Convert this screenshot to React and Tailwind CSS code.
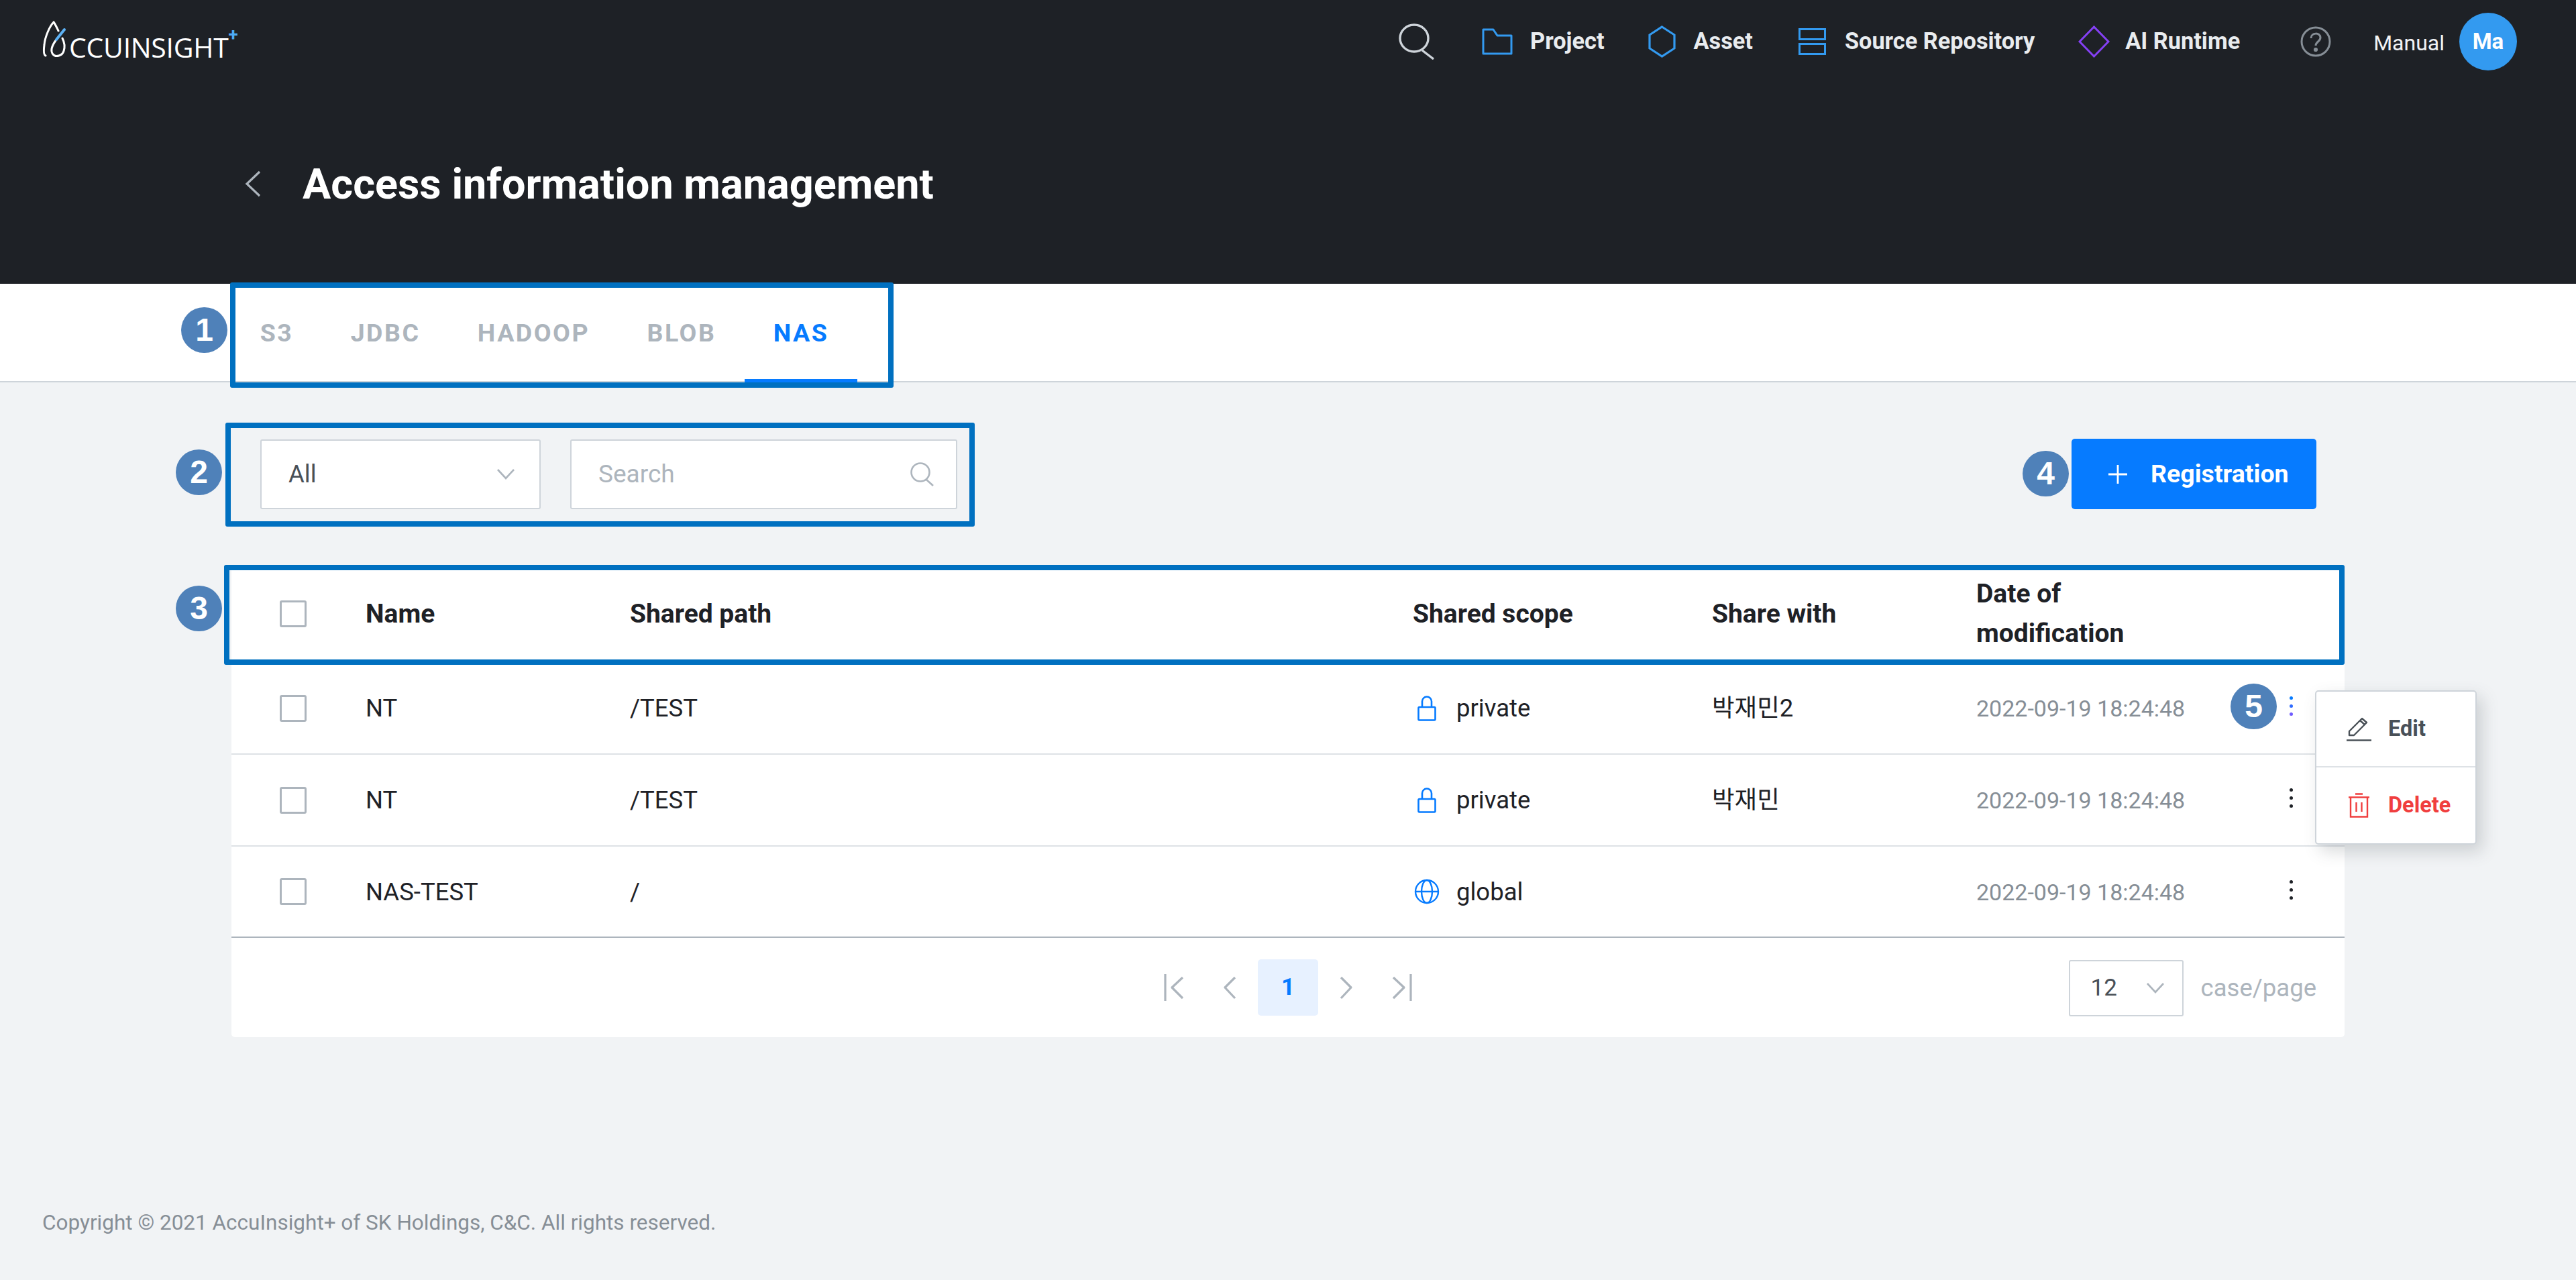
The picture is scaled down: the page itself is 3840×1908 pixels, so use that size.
import React from 'react';

const rows = [
  { name: 'NT', path: '/TEST', scope: 'private', share: '박재민2', active: true },
  { name: 'NT', path: '/TEST', scope: 'private', share: '박재민' },
  { name: 'NAS-TEST', path: '/', scope: 'global', share: '' },
];

const tabs = ['S3', 'JDBC', 'HADOOP', 'BLOB', 'NAS'];

const LockIcon = () => (
  <svg width="28" height="38" viewBox="0 0 28 38" fill="none" stroke="#067bff" strokeWidth="2.6">
    <rect x="1.5" y="17" width="25" height="19.5" rx="1.5" />
    <path d="M7 17V8.5a7 7 0 0 1 14 0V17" />
  </svg>
);

const GlobeIcon = () => (
  <svg width="38" height="38" viewBox="0 0 38 38" fill="none" stroke="#067bff" strokeWidth="2.4">
    <circle cx="19" cy="19" r="17" />
    <ellipse cx="19" cy="19" rx="8" ry="17" />
    <path d="M2 19h34" />
  </svg>
);

const Dots = ({ active }) => (
  <div className="flex flex-col gap-[7px] items-center">
    <span className={`w-[5px] h-[5px] rounded-full ${active ? 'bg-[#067bff]' : 'bg-[#1e2126]'}`} />
    <span className={`w-[5px] h-[5px] rounded-full ${active ? 'bg-[#2f6bff]' : 'bg-[#1e2126]'}`} />
    <span className={`w-[5px] h-[5px] rounded-full ${active ? 'bg-[#6f5bff]' : 'bg-[#1e2126]'}`} />
  </div>
);

const Checkbox = () => (
  <div className="w-[40px] h-[40px] border-[3px] border-[#adb5bd] rounded-[3px] bg-white" />
);

const EdgeChevron = ({ left }) => (
  <svg width="30" height="40" viewBox="0 0 30 40" fill="none" stroke="#adb5bd" strokeWidth="3.2" strokeLinejoin="round">
    {left ? <path d="M2 0v40M28 5L12 20l16 16" /> : <path d="M28 0v40M2 5l16 15L2 36" />}
  </svg>
);

const PageChevron = ({ left }) => (
  <svg width="20" height="40" viewBox="0 0 20 40" fill="none" stroke="#adb5bd" strokeWidth="3.2" strokeLinejoin="round">
    {left ? <path d="M18 5L3 20l15 16" /> : <path d="M2 5l15 15L2 36" />}
  </svg>
);

const Badge = ({ className, children }) => (
  <div className={`absolute w-[69px] h-[68px] rounded-full bg-[#4f81b9] text-white font-['Liberation_Sans',sans-serif] font-bold text-[48px] flex items-center justify-center ${className}`}>
    {children}
  </div>
);

const App = () => {
  return (
    <div className="relative w-[3840px] h-[1908px] overflow-hidden flex flex-col bg-[#f1f3f5] font-['Roboto','Noto_Sans_CJK_KR',sans-serif]">
      {/* Header */}
      <header className="h-[423px] bg-[#1e2126] flex flex-col shrink-0">
        <div className="h-[124px] flex items-center pl-[63px] pr-[88px]">
          <div className="flex items-end h-[56px] -mt-[6px]">
            <svg width="40" height="56" viewBox="0 0 40 56" fill="none" strokeWidth="3" strokeLinecap="round">
              <path d="M5 52c-3-1-3-8-2-16C4 24 11 8 17 2c3 4 5 9 7 13" stroke="#fff" />
              <path d="M30 26c3 6 4 13 2 19-2 7-12 10-16 5-5-6-1-14 5-22" stroke="#fff" />
              <path d="M21 28l12-15" stroke="#5db2f5" strokeWidth="4" />
            </svg>
            <span className="font-['Open_Sans',sans-serif] text-[41px] leading-[34px] text-white tracking-[-0.3px]">CCUINSIGHT</span>
            <span className="text-[#4dabf7] text-[26px] leading-none font-bold self-start mt-[7px]">+</span>
          </div>
          <div className="ml-auto flex items-center text-[34.3px] font-bold text-[#e9ecef]">
            <svg width="54" height="54" viewBox="0 0 54 54" fill="none" stroke="#ced4da" strokeWidth="3.4">
              <ellipse cx="23" cy="22" rx="21" ry="20" />
              <path d="M35 40l17 13" />
            </svg>
            <div className="flex items-center gap-[26px] ml-[70px]">
              <svg width="46" height="40" viewBox="0 0 46 40" fill="none" stroke="#339af0" strokeWidth="3">
                <path d="M2 2h15l6 9h21v27H2z" strokeLinejoin="round" />
              </svg>
              <span>Project</span>
            </div>
            <div className="flex items-center gap-[27px] ml-[65px]">
              <svg width="41" height="48" viewBox="0 0 41 48" fill="none" stroke="#339af0" strokeWidth="3.2">
                <path d="M20.5 2L39 14v20L20.5 46 2 34V14z" />
              </svg>
              <span>Asset</span>
            </div>
            <div className="flex items-center gap-[28px] ml-[68px]">
              <svg width="41" height="40" viewBox="0 0 41 40" fill="none" stroke="#339af0" strokeWidth="3">
                <rect x="1.5" y="1.5" width="38" height="15" />
                <rect x="1.5" y="23.5" width="38" height="15" />
              </svg>
              <span>Source Repository</span>
            </div>
            <div className="flex items-center gap-[23px] ml-[65px]">
              <svg width="47" height="48" viewBox="0 0 47 48" fill="none" stroke="#8540f5" strokeWidth="3">
                <path d="M23.5 2L45 24 23.5 46 2 24z" />
              </svg>
              <span>AI Runtime</span>
            </div>
            <svg className="ml-[90px]" width="46" height="46" viewBox="0 0 46 46" fill="none" stroke="#868e96" strokeWidth="3">
              <circle cx="23" cy="23" r="21" />
              <path d="M16 18c0-9 14-9 14-1 0 6-7 6-7 12" />
              <circle cx="23" cy="35" r="1.6" fill="#868e96" />
            </svg>
            <span className="ml-[63px] text-[32px] font-normal text-[#f1f3f5] mt-[4px]">Manual</span>
            <div className="ml-[22px] w-[86px] h-[86px] rounded-full bg-[#339af0] flex items-center justify-center text-white text-[33px] font-bold">Ma</div>
          </div>
        </div>
        <div className="flex-1 flex items-center pl-[365px]">
          <svg width="24" height="40" viewBox="0 0 24 40" fill="none" stroke="#adb5bd" strokeWidth="3.2">
            <path d="M22 2L3 20l19 18" />
          </svg>
          <h1 className="ml-[62px] pt-[3px] text-[63px] font-bold text-white">Access information management</h1>
        </div>
      </header>

      {/* Tabs */}
      <nav className="h-[147px] shrink-0 bg-white border-b-2 border-[#ced4da] pl-[345px] flex">
        {tabs.map((tab) => (
          <div
            key={tab}
            className={`px-[42.7px] flex items-center text-[37.5px] font-bold tracking-[2.5px] -mb-[2px] border-b-[5px] pt-[5px] ${tab === 'NAS' ? 'text-[#067bff] border-[#067bff]' : 'text-[#adb5bd] border-transparent'}`}
          >
            {tab}
          </div>
        ))}
      </nav>

      <main className="px-[345px]">
        {/* Toolbar */}
        <div className="mt-[84px] h-[105px] flex items-center">
          <div className="ml-[43px] w-[418px] h-[104px] bg-white border-2 border-[#ced4da] rounded-[3px] flex items-center justify-between pl-[40px] pr-[37px] text-[36.5px] text-[#495057]">
            <span className="pt-[2px]">All</span>
            <svg width="26" height="16" viewBox="0 0 26 16" fill="none" stroke="#adb5bd" strokeWidth="2.6">
              <path d="M1 1l12 13L25 1" />
            </svg>
          </div>
          <div className="ml-[44px] w-[577px] h-[104px] bg-white border-2 border-[#ced4da] rounded-[3px] flex items-center pl-[40px] pr-[32px]">
            <input
              placeholder="Search"
              className="flex-1 min-w-0 outline-none text-[37px] text-[#495057] placeholder:text-[#adb5bd]"
            />
            <svg width="36" height="36" viewBox="0 0 36 36" fill="none" stroke="#adb5bd" strokeWidth="2.6">
              <circle cx="15" cy="15" r="13.5" />
              <path d="M24 26l10 9" />
            </svg>
          </div>
          <button className="ml-auto mr-[42px] w-[365px] h-[105px] rounded-[5px] bg-[#067bff] text-white text-[37.5px] font-bold flex items-center pl-[55px] gap-[35px]">
            <svg width="28" height="28" viewBox="0 0 28 28" fill="none" stroke="#fff" strokeWidth="2.8">
              <path d="M14 0v28M0 14h28" />
            </svg>
            <span>Registration</span>
          </button>
        </div>

        {/* Table */}
        <div className="mt-[83px] bg-white rounded-b-[5px]">
          <div className="h-[146px] grid grid-cols-[200px_394px_1167px_446px_394px_449px_100px] items-center text-[39px] font-bold text-[#1e2126]">
            <div className="pl-[72px]"><Checkbox /></div>
            <div>Name</div>
            <div>Shared path</div>
            <div>Shared scope</div>
            <div>Share with</div>
            <div className="leading-[59px]">Date of<br />modification</div>
          </div>
          {rows.map((row, i) => (
            <div
              key={i}
              className={`grid grid-cols-[200px_394px_1167px_446px_394px_449px_100px] items-center text-[36.5px] text-[#1e2126] border-b-2 ${i === rows.length - 1 ? 'h-[136px] border-[#adb5bd]' : 'h-[137px] border-[#dee2e6]'}`}
            >
              <div className="pl-[72px]"><Checkbox /></div>
              <div className="pt-[2px]">{row.name}</div>
              <div className="pt-[2px]">{row.path}</div>
              <div className="flex items-center gap-[23px]">
                <div className="w-[42px] flex justify-center">
                  {row.scope === 'private' ? <LockIcon /> : <GlobeIcon />}
                </div>
                <span className="pt-[2px]">{row.scope}</span>
              </div>
              <div className="pt-[2px]">{row.share}</div>
              <div className="pt-[2px] text-[34px] text-[#868e96]">2022-09-19 18:24:48</div>
              <div className="pl-[18px] -mt-[6px] flex"><Dots active={row.active} /></div>
            </div>
          ))}

          {/* Pagination */}
          <div className="relative h-[148px] flex items-center justify-center">
            <div className="flex items-center">
              <EdgeChevron left />
              <div className="ml-[58px] mr-[32px]"><PageChevron left /></div>
              <div className="w-[90px] h-[84px] rounded-[5px] bg-[#e7f1ff] text-[#067bff] text-[35px] font-bold flex items-center justify-center">1</div>
              <div className="ml-[32px] mr-[58px]"><PageChevron /></div>
              <EdgeChevron />
            </div>
            <div className="absolute right-[42px] top-[33px] flex items-center">
              <div className="w-[171px] h-[84px] border-2 border-[#ced4da] rounded-[3px] flex items-center justify-between pl-[31px] pr-[27px] text-[35px] text-[#495057]">
                <span>12</span>
                <svg width="26" height="16" viewBox="0 0 26 16" fill="none" stroke="#adb5bd" strokeWidth="2.6">
                  <path d="M1 1l12 13L25 1" />
                </svg>
              </div>
              <span className="ml-[26px] text-[36.5px] text-[#adb5bd]">case/page</span>
            </div>
          </div>
        </div>
      </main>

      <footer className="mt-auto h-[170px] flex items-center pl-[63px] text-[31.5px] text-[#868e96]">
        Copyright © 2021 AccuInsight+ of SK Holdings, C&amp;C. All rights reserved.
      </footer>

      {/* Row action menu */}
      <div className="absolute left-[3451px] top-[1029px] w-[241px] h-[230px] bg-white border-2 border-[#ced4da] rounded-[5px] shadow-[8px_10px_24px_rgba(73,80,87,0.22)] flex flex-col text-[32.5px] font-bold">
        <div className="h-[113px] flex items-center pl-[45px] gap-[25px] text-[#495057] border-b-2 border-[#dee2e6]">
          <svg width="37" height="37" viewBox="0 0 37 37" fill="none" stroke="#495057" strokeWidth="2.4">
            <path d="M4 28V22L23 3l7 6-19 19z" strokeLinejoin="round" />
            <path d="M20 6l7 6" />
            <path d="M0 35.5h37" />
          </svg>
          <span>Edit</span>
        </div>
        <div className="flex-1 flex items-center pl-[48px] gap-[28px] text-[#f03e3e]">
          <svg width="31" height="37" viewBox="0 0 31 37" fill="none" stroke="#f03e3e" strokeWidth="2.4">
            <path d="M10 1.5h11M0 6.5h31" />
            <path d="M3 6.5V35.5h25V6.5M11.5 14v14M19.5 14v14" />
          </svg>
          <span>Delete</span>
        </div>
      </div>

      {/* Callout annotations */}
      <div className="absolute left-[343px] top-[421px] w-[989px] h-[157px] border-[8px] border-[#0070c0] rounded-[3px]" />
      <div className="absolute left-[336px] top-[630px] w-[1117px] h-[155px] border-[8px] border-[#0070c0] rounded-[3px]" />
      <div className="absolute left-[334px] top-[842px] w-[3161px] h-[149px] border-[8px] border-[#0070c0] rounded-[3px]" />
      <Badge className="left-[270px] top-[458px]">1</Badge>
      <Badge className="left-[262px] top-[670px]">2</Badge>
      <Badge className="left-[262px] top-[873px]">3</Badge>
      <Badge className="left-[3015px] top-[672px]">4</Badge>
      <Badge className="left-[3325px] top-[1019px]">5</Badge>
    </div>
  );
};

export default App;
